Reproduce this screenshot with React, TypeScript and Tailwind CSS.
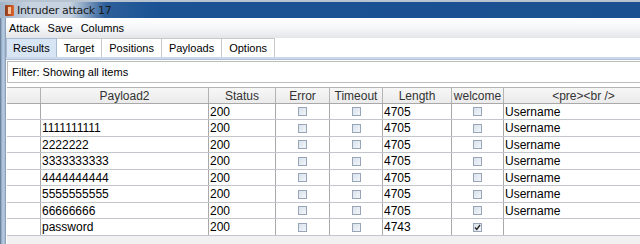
import React from 'react';

type Row = { payload: string; status: string; length: string; welcome: boolean; pre: string };

const rows: Row[] = [
  { payload: '', status: '200', length: '4705', welcome: false, pre: 'Username' },
  { payload: '1111111111', status: '200', length: '4705', welcome: false, pre: 'Username' },
  { payload: '2222222', status: '200', length: '4705', welcome: false, pre: 'Username' },
  { payload: '3333333333', status: '200', length: '4705', welcome: false, pre: 'Username' },
  { payload: '4444444444', status: '200', length: '4705', welcome: false, pre: 'Username' },
  { payload: '5555555555', status: '200', length: '4705', welcome: false, pre: 'Username' },
  { payload: '66666666', status: '200', length: '4705', welcome: false, pre: 'Username' },
  { payload: 'password', status: '200', length: '4743', welcome: true, pre: '' },
];

const headers = ['', 'Payload2', 'Status', 'Error', 'Timeout', 'Length', 'welcome', '<pre><br />'];

const gridCols = 'grid grid-cols-[34px_168px_67px_54px_53px_69px_52px_160px]';

function Check({ checked = false }: { checked?: boolean }) {
  return (
    <div className="w-[9px] h-[9px] border border-[#97a5b7] bg-gradient-to-br from-[#d9e2ec] to-[#f3f6fa] relative">
      {checked && (
        <svg viewBox="0 0 9 9" className="absolute -left-px -top-px w-[9px] h-[9px]">
          <path d="M2 4.5 L3.8 6.5 L7 2" stroke="#222" strokeWidth="1.3" fill="none" />
        </svg>
      )}
    </div>
  );
}

export default function App() {
  const tabs = ['Results', 'Target', 'Positions', 'Payloads', 'Options'];

  return (
    <div className="w-[640px] h-[244px] overflow-hidden flex flex-col bg-[#f0f0f0] font-['Liberation_Sans',Arial,sans-serif] text-black">
      {/* title bar */}
      <div className="h-[18px] shrink-0 flex items-center border-t-2 border-[#b7c3d1] bg-[linear-gradient(90deg,#9fb2c8_0px,#c7d3e0_30px,#c7d3e0_70px,#2d5f9a_105px,#1a5294_160px,#1b5090_640px)]">
        <div className="ml-[5px] w-[9px] h-[11px] bg-[linear-gradient(90deg,#8a3a1c,#e0642a)] rounded-[1px] flex items-center justify-center">
          <div className="w-[3px] h-[7px] bg-[#f6c29a]" />
        </div>
        <span className="ml-[3px] text-[11px] leading-none text-[#1a1a1a] font-['DejaVu_Sans',sans-serif] tracking-[-0.3px]">Intruder attack 17</span>
      </div>

      <div className="flex flex-1 min-h-0">
        {/* left window frame */}
        <div className="w-[6px] shrink-0 bg-[linear-gradient(90deg,#5b6f88_0px,#a9bfd9_2px,#b7cbe2_4px,#7f93ab_6px)]" />

        <div className="flex-1 flex flex-col min-w-0">
          {/* menu bar */}
          <div className="h-[20px] shrink-0 flex items-center gap-[8px] pl-[3px] text-[11px] bg-[linear-gradient(180deg,#ffffff,#f6f7f9_50%,#e3e5e8)]">
            <span>Attack</span>
            <span>Save</span>
            <span>Columns</span>
          </div>

          {/* tabs */}
          <div className="h-[19px] shrink-0 flex items-end bg-white">
            {tabs.map((t, i) => (
              <div
                key={t}
                className={
                  i === 0
                    ? 'h-[19px] px-[6px] flex items-center text-[11px] border border-b-0 border-[#a9bcd4] bg-[#d8e5f4]'
                    : 'h-[19px] px-[7px] flex items-center text-[11px] border border-b-0 border-l-0 border-[#c9c9c9] bg-white'
                }
              >
                {t}
              </div>
            ))}
          </div>
          <div className="h-[3px] shrink-0 bg-[#c9d8ea] border-b border-[#b1c2d8]" />

          {/* content */}
          <div className="flex-1 flex flex-col min-h-0 pl-[1px] bg-white">
            <div className="h-[22px] shrink-0 mt-[1px] flex items-center pl-[4px] text-[11px] border border-r-0 border-[#bdbdbd] bg-white">
              Filter: Showing all items
            </div>

            <div className="h-[4px] shrink-0 bg-white" />

            <div className="flex-1 min-h-0 overflow-hidden bg-[#f1f1f1] border-t border-[#b4b4b4]">
              <div className={`${gridCols} h-[16px] bg-[linear-gradient(180deg,#f7f7f7,#ebebeb)] border-b border-[#a9a9a9]`}>
                {headers.map((h, i) => (
                  <div
                    key={i}
                    className="flex items-center justify-center text-[12px] text-[#333] border-r border-[#b3b3b3] leading-none"
                  >
                    {h}
                  </div>
                ))}
              </div>

              {rows.map((r, idx) => (
                <div
                  key={idx}
                  className={`${gridCols} ${idx % 2 === 0 ? 'h-[16px]' : 'h-[17px]'} bg-white border-b border-[#c3c6cc] text-[12px] leading-none`}
                >
                  <div className="border-r border-[#a9a9a9]" />
                  <div className="flex items-center pl-[1px] border-r border-[#a9a9a9]">{r.payload}</div>
                  <div className="flex items-center pl-[1px] border-r border-[#a9a9a9]">{r.status}</div>
                  <div className="flex items-center justify-center border-r border-[#a9a9a9]">
                    <Check />
                  </div>
                  <div className="flex items-center justify-center border-r border-[#a9a9a9]">
                    <Check />
                  </div>
                  <div className="flex items-center pl-[1px] border-r border-[#a9a9a9]">{r.length}</div>
                  <div className="flex items-center justify-center border-r border-[#a9a9a9]">
                    <Check checked={r.welcome} />
                  </div>
                  <div className="flex items-center pl-[1px]">{r.pre}</div>
                </div>
              ))}
            </div>
          </div>
        </div>
      </div>
    </div>
  );
}
